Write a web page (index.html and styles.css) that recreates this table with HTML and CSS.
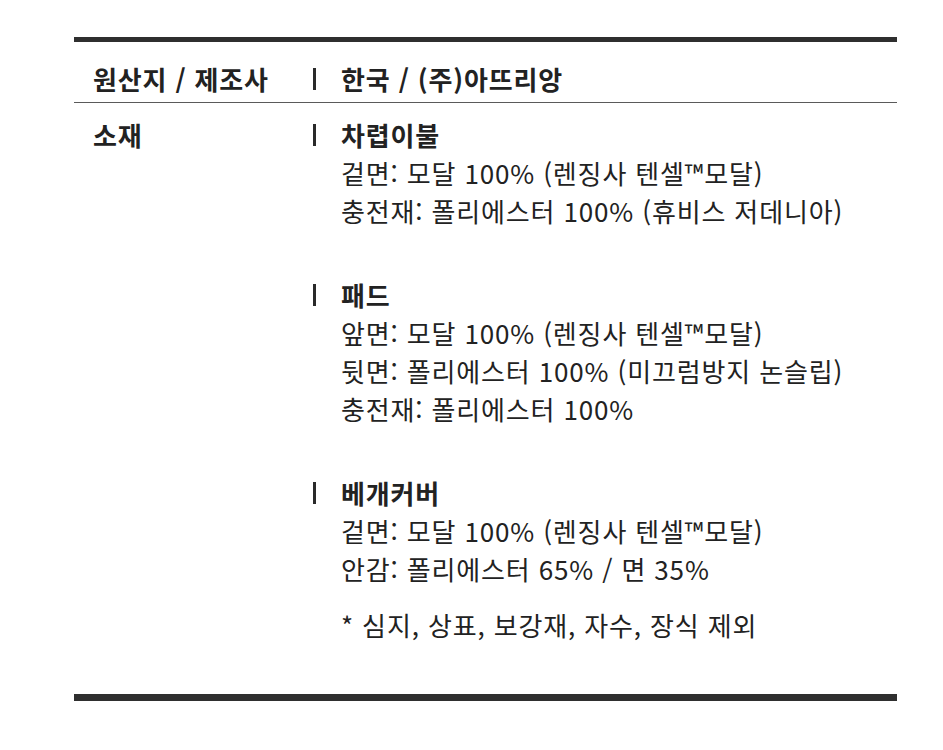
FILE: index.html
```html
<!DOCTYPE html>
<html lang="ko">
<head>
<meta charset="utf-8">
<link rel="stylesheet" href="styles.css">
</head>
<body>
<div class="spec">
  <div class="row row-head">
    <div class="label">원산지 / 제조사</div>
    <div class="sep"><span class="bar"></span></div>
    <div class="value"><div class="line">한국 / (주)아뜨리앙</div></div>
  </div>
  <div class="row row-body">
    <div class="label">소재</div>
    <div class="groups">
      <div class="group">
        <div class="sep"><span class="bar"></span></div>
        <div class="value">
          <div class="line title">차렵이불</div>
          <div class="line">겉면: 모달 100% (렌징사 텐셀™모달)</div>
          <div class="line">충전재: 폴리에스터 100% (휴비스 저데니아)</div>
        </div>
      </div>
      <div class="group">
        <div class="sep"><span class="bar"></span></div>
        <div class="value">
          <div class="line title">패드</div>
          <div class="line">앞면: 모달 100% (렌징사 텐셀™모달)</div>
          <div class="line">뒷면: 폴리에스터 100% (미끄럼방지 논슬립)</div>
          <div class="line">충전재: 폴리에스터 100%</div>
        </div>
      </div>
      <div class="group">
        <div class="sep"><span class="bar"></span></div>
        <div class="value">
          <div class="line title">베개커버</div>
          <div class="line">겉면: 모달 100% (렌징사 텐셀™모달)</div>
          <div class="line">안감: 폴리에스터 65% / 면 35%</div>
          <div class="line note">* 심지, 상표, 보강재, 자수, 장식 제외</div>
        </div>
      </div>
    </div>
  </div>
</div>
</body>
</html>
```
FILE: styles.css
```css
html, body {
  margin: 0;
  padding: 0;
  background: #ffffff;
}
body {
  font-family: "Noto Sans CJK KR", "Noto Sans", sans-serif;
  color: #222222;
  font-size: 26px;
  letter-spacing: 0.85px;
}
.spec {
  margin: 37px 0 0 74px;
  width: 823px;
  border-top: 5px solid #2f2f2f;
  border-bottom: 7px solid #2f2f2f;
}
.row {
  display: flex;
  padding-left: 19px;
}
.row-head {
  padding-top: 18px;
  padding-bottom: 4px;
  border-bottom: 1px solid #5a5a5a;
}
.row-body {
  padding-top: 13px;
  padding-bottom: 50px;
}
.label {
  width: 221px;
  flex: none;
  font-weight: 700;
  line-height: 38px;
}
.groups {
  display: flex;
  flex-direction: column;
  gap: 46px;
}
.group {
  display: flex;
}
.sep {
  width: 27px;
  flex: none;
  height: 38px;
  display: flex;
  align-items: center;
}
.bar {
  display: block;
  width: 3px;
  height: 22px;
  margin-left: -1px;
  background: #2a2a2a;
}
.line {
  line-height: 38px;
  white-space: nowrap;
}
.title, .row-head .value .line {
  font-weight: 700;
}
.note {
  margin-top: 18px;
}
```
